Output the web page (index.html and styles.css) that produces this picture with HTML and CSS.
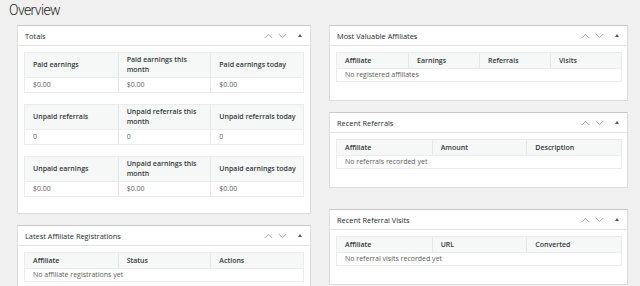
FILE: index.html
```html
<!DOCTYPE html>
<html lang="en">
<head>
<meta charset="utf-8">
<title>Overview</title>
<link rel="stylesheet" href="styles.css">
</head>
<body>
<h1 class="page-title">Overview</h1>
<div class="dashboard">
  <div class="col col-left">
    <section class="postbox">
      <header class="postbox-header">
        <h2>Totals</h2>
        <div class="handle-actions">
          <svg class="chev" width="9" height="6" viewBox="0 0 9 6"><path d="M0.8 5 L4.5 1.3 L8.2 5" /></svg>
          <svg class="chev chev-down" width="9" height="6" viewBox="0 0 9 6"><path d="M0.8 1 L4.5 4.7 L8.2 1" /></svg>
          <svg class="toggle" width="4" height="3" viewBox="0 0 4 3"><path d="M0 3 L2 0 L4 3 Z" /></svg>
        </div>
      </header>
      <div class="inside">
        <table class="grid stats">
          <thead><tr><th>Paid earnings</th><th>Paid earnings this month</th><th>Paid earnings today</th></tr></thead>
          <tbody><tr><td>$0.00</td><td>$0.00</td><td>$0.00</td></tr></tbody>
        </table>
        <table class="grid stats">
          <thead><tr><th>Unpaid referrals</th><th>Unpaid referrals this month</th><th>Unpaid referrals today</th></tr></thead>
          <tbody><tr><td>0</td><td>0</td><td>0</td></tr></tbody>
        </table>
        <table class="grid stats">
          <thead><tr><th>Unpaid earnings</th><th>Unpaid earnings this month</th><th>Unpaid earnings today</th></tr></thead>
          <tbody><tr><td>$0.00</td><td>$0.00</td><td>$0.00</td></tr></tbody>
        </table>
      </div>
    </section>
    <section class="postbox">
      <header class="postbox-header">
        <h2>Latest Affiliate Registrations</h2>
        <div class="handle-actions">
          <svg class="chev" width="9" height="6" viewBox="0 0 9 6"><path d="M0.8 5 L4.5 1.3 L8.2 5" /></svg>
          <svg class="chev chev-down" width="9" height="6" viewBox="0 0 9 6"><path d="M0.8 1 L4.5 4.7 L8.2 1" /></svg>
          <svg class="toggle" width="4" height="3" viewBox="0 0 4 3"><path d="M0 3 L2 0 L4 3 Z" /></svg>
        </div>
      </header>
      <div class="inside">
        <table class="grid list">
          <thead><tr><th>Affiliate</th><th>Status</th><th>Actions</th></tr></thead>
          <tbody><tr><td colspan="3" class="empty">No affiliate registrations yet</td></tr></tbody>
        </table>
      </div>
    </section>
  </div>
  <div class="col col-right">
    <section class="postbox">
      <header class="postbox-header">
        <h2>Most Valuable Affiliates</h2>
        <div class="handle-actions">
          <svg class="chev" width="9" height="6" viewBox="0 0 9 6"><path d="M0.8 5 L4.5 1.3 L8.2 5" /></svg>
          <svg class="chev chev-down" width="9" height="6" viewBox="0 0 9 6"><path d="M0.8 1 L4.5 4.7 L8.2 1" /></svg>
          <svg class="toggle" width="4" height="3" viewBox="0 0 4 3"><path d="M0 3 L2 0 L4 3 Z" /></svg>
        </div>
      </header>
      <div class="inside">
        <table class="grid list">
          <thead><tr><th>Affiliate</th><th>Earnings</th><th>Referrals</th><th>Visits</th></tr></thead>
          <tbody><tr><td colspan="4" class="empty">No registered affiliates</td></tr></tbody>
        </table>
      </div>
    </section>
    <section class="postbox">
      <header class="postbox-header">
        <h2>Recent Referrals</h2>
        <div class="handle-actions">
          <svg class="chev" width="9" height="6" viewBox="0 0 9 6"><path d="M0.8 5 L4.5 1.3 L8.2 5" /></svg>
          <svg class="chev chev-down" width="9" height="6" viewBox="0 0 9 6"><path d="M0.8 1 L4.5 4.7 L8.2 1" /></svg>
          <svg class="toggle" width="4" height="3" viewBox="0 0 4 3"><path d="M0 3 L2 0 L4 3 Z" /></svg>
        </div>
      </header>
      <div class="inside">
        <table class="grid list">
          <thead><tr><th>Affiliate</th><th>Amount</th><th>Description</th></tr></thead>
          <tbody><tr><td colspan="3" class="empty">No referrals recorded yet</td></tr></tbody>
        </table>
      </div>
    </section>
    <section class="postbox postbox-spaced">
      <header class="postbox-header">
        <h2>Recent Referral Visits</h2>
        <div class="handle-actions">
          <svg class="chev" width="9" height="6" viewBox="0 0 9 6"><path d="M0.8 5 L4.5 1.3 L8.2 5" /></svg>
          <svg class="chev chev-down" width="9" height="6" viewBox="0 0 9 6"><path d="M0.8 1 L4.5 4.7 L8.2 1" /></svg>
          <svg class="toggle" width="4" height="3" viewBox="0 0 4 3"><path d="M0 3 L2 0 L4 3 Z" /></svg>
        </div>
      </header>
      <div class="inside">
        <table class="grid list">
          <thead><tr><th>Affiliate</th><th>URL</th><th>Converted</th></tr></thead>
          <tbody><tr><td colspan="3" class="empty">No referral visits recorded yet</td></tr></tbody>
        </table>
      </div>
    </section>
  </div>
</div>
</body>
</html>
```

FILE: styles.css
```css
html, body {
  margin: 0;
  padding: 0;
}

body {
  width: 640px;
  height: 286px;
  overflow: hidden;
  background: #f0f0f1;
  font-family: "Open Sans", "Noto Sans", sans-serif;
  font-size: 7px;
  color: #5a5a5a;
}

.page-title {
  margin: 0;
  padding: 0 0 0 9px;
  font-family: Roboto, "Open Sans", sans-serif;
  font-weight: 300;
  font-size: 14px;
  line-height: 20px;
  letter-spacing: -0.6px;
  color: #1d2327;
}

.dashboard {
  display: grid;
  grid-template-columns: 294px 299px;
  column-gap: 18px;
  align-items: start;
  padding-left: 17px;
  margin-top: 5px;
}

.col {
  display: flex;
  flex-direction: column;
  gap: 11px;
}

.postbox {
  background: #fff;
  border: 1px solid #dcdcde;
  border-top-color: #c8c9cc;
}

.postbox-spaced {
  margin-top: 10px;
}

.postbox-header {
  display: flex;
  align-items: center;
  height: 19px;
  padding: 0 8px 0 7px;
  border-bottom: 1px solid #e2e3e5;
}

.postbox-header h2 {
  flex: 1;
  margin: 0;
  font-size: 7.4px;
  font-weight: 500;
  line-height: 10px;
  color: #23282d;
}

.handle-actions {
  display: flex;
  align-items: center;
}

.chev path {
  fill: none;
  stroke: #9a9ea3;
  stroke-width: 1;
}

.chev-down {
  margin-left: 5px;
}

.toggle {
  margin-left: 11px;
}

.toggle path {
  fill: #50575e;
}

.inside {
  padding: 6px 6px 16px;
}

.col-right .inside {
  padding: 6px 5px 18px 6px;
}

.grid {
  width: 100%;
  table-layout: fixed;
  border-collapse: separate;
  border-spacing: 0;
  border: 1px solid #ebebeb;
}

.grid th {
  background: #f6f7f7;
  text-align: left;
  font-weight: 600;
  color: #32373c;
  line-height: 10px;
  padding: 2.5px 4px 2.5px 8px;
  vertical-align: middle;
}

.grid td {
  line-height: 10px;
  padding: 1px 4px 1px 8px;
  border-top: 1px solid #ededed;
  color: #5a5a5a;
}

.grid th + th,
.grid td + td {
  border-left: 1px solid #e6e6e6;
}

.stats {
  margin-bottom: 11px;
}

.stats:last-child {
  margin-bottom: 0;
}

.stats th {
  padding-top: 2px;
  padding-bottom: 2px;
  height: 20px;
}

.stats td {
  padding-top: 2px;
  padding-bottom: 2px;
}

.empty {
  color: #6b6f74;
}
```
